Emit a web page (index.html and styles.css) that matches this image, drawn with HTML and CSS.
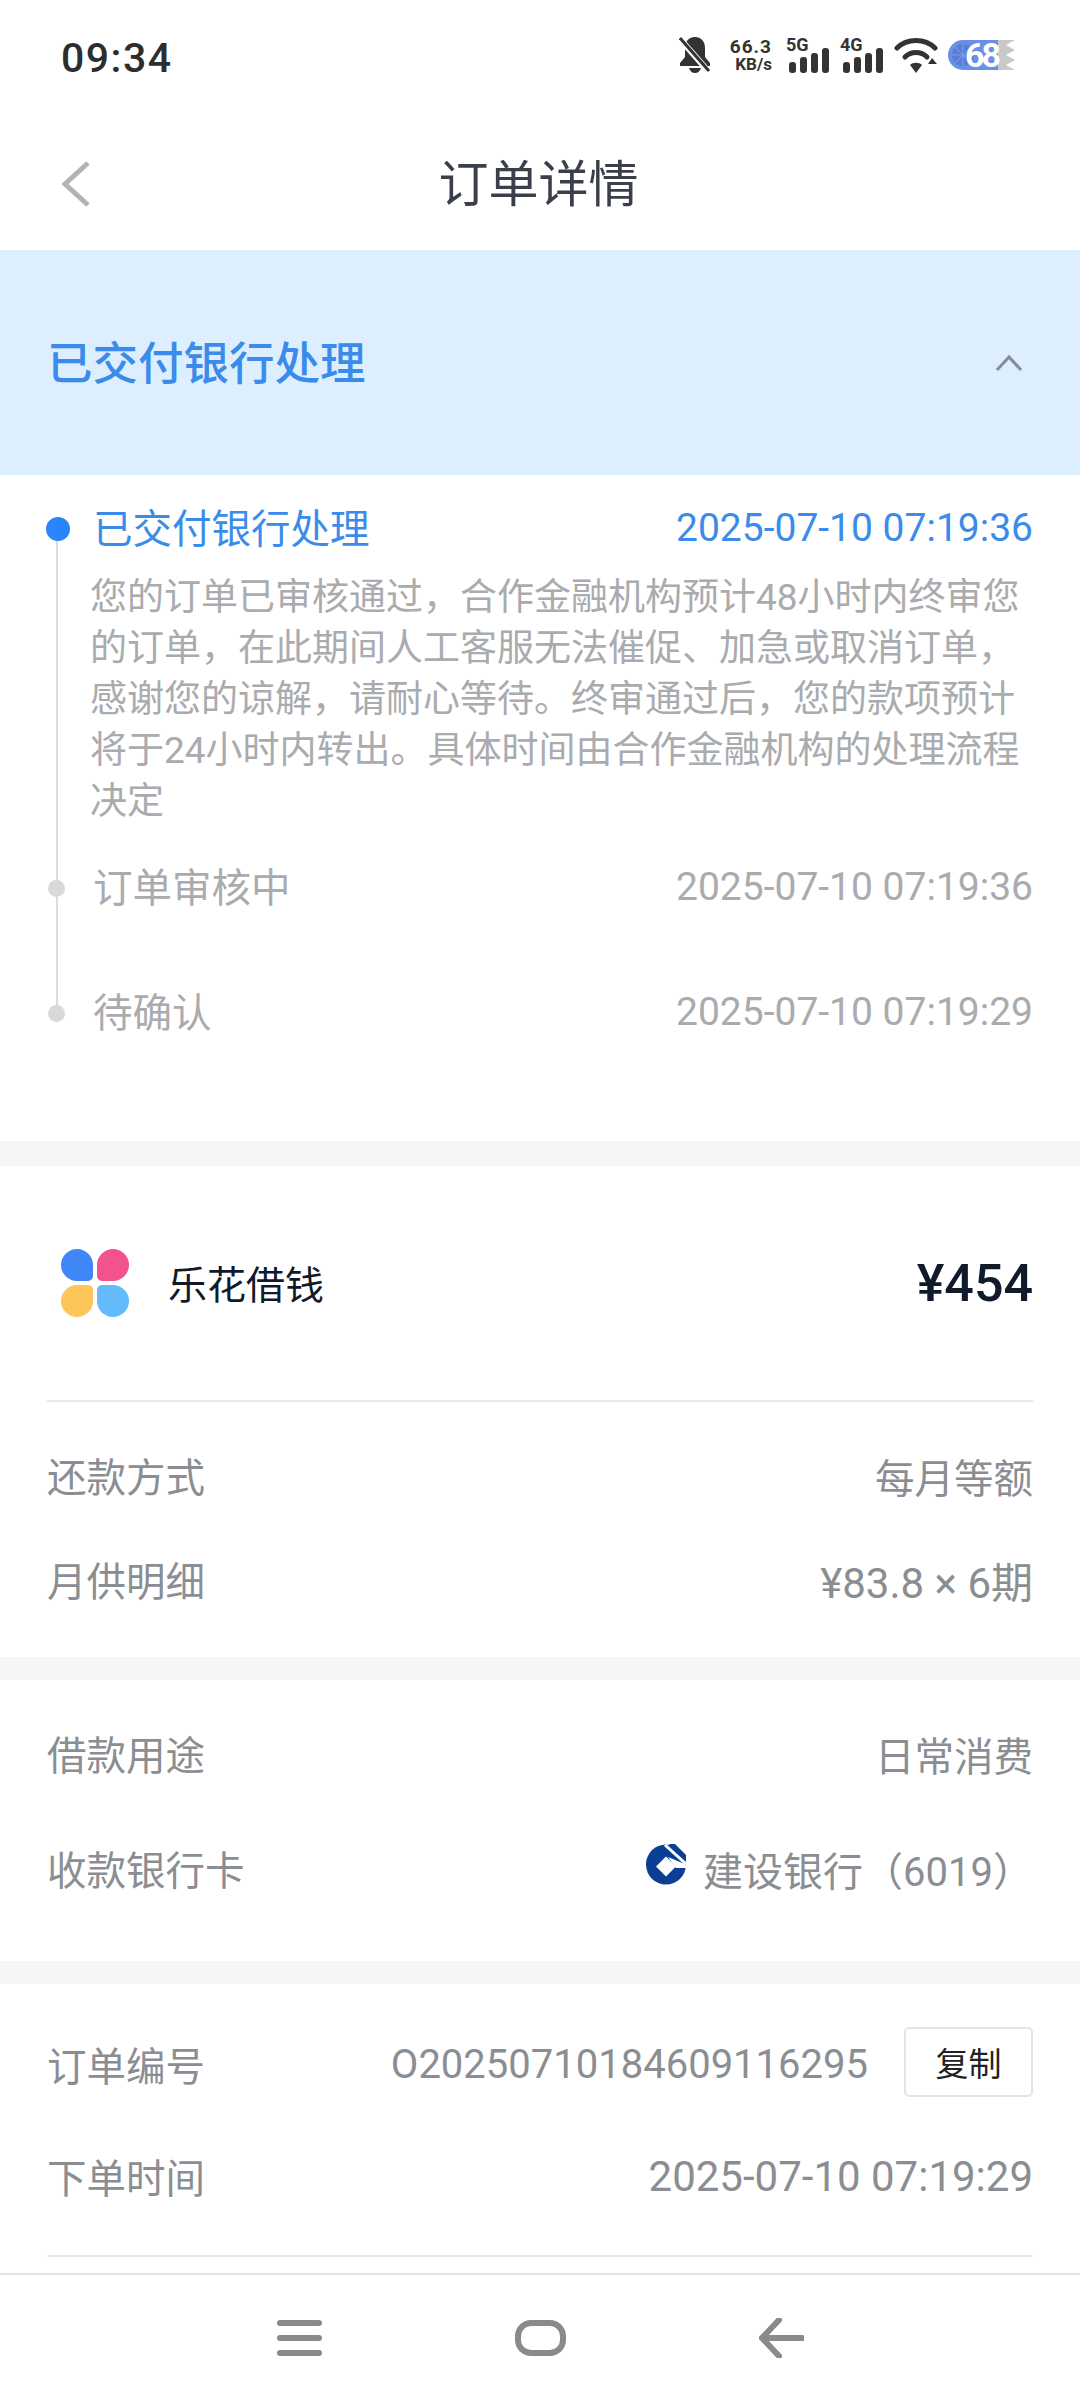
FILE: index.html
```html
<!DOCTYPE html>
<html lang="zh-CN">

<head>
    <meta charset="UTF-8" />
    <meta name="viewport" content="width=device-width, initial-scale=1" />
    <title>订单详情</title>
    <link rel="stylesheet" href="styles.css">
</head>

<body>
    <!-- Status bar -->
    <div class="status-bar">
        <span class="clock">09:34</span>
        <div class="status-icons">
            <svg class="bell" width="32" height="36" viewBox="0 0 32 36">
                <path d="M16 0c6 0 10 4 10 11v9l5 6v3H1v-3l5-6V11C6 4 10 0 16 0z" fill="#333" />
                <path d="M10 31h12c-1 3-3 5-6 5s-5-2-6-5z" fill="#333" />
                <path d="M1 2l29 33" stroke="#fff" stroke-width="6" />
                <path d="M1 1l29 33" stroke="#333" stroke-width="3" />
            </svg>
            <div class="speed"><span>66.3</span><span>KB/s</span></div>
            <div class="signal">
                <span>5G</span>
                <svg width="41" height="25" viewBox="0 0 41 25" fill="#333">
                    <rect x="0" y="14" width="7" height="11" rx="3" />
                    <rect x="11" y="9" width="7" height="16" rx="3" />
                    <rect x="22" y="5" width="7" height="20" rx="3" />
                    <rect x="33" y="0" width="7" height="25" rx="3" />
                </svg>
            </div>
            <div class="signal">
                <span>4G</span>
                <svg width="41" height="25" viewBox="0 0 41 25" fill="#333">
                    <rect x="0" y="14" width="7" height="11" rx="3" />
                    <rect x="11" y="9" width="7" height="16" rx="3" />
                    <rect x="22" y="5" width="7" height="20" rx="3" />
                    <rect x="33" y="0" width="7" height="25" rx="3" />
                </svg>
            </div>
            <svg class="wifi" width="44" height="36" viewBox="0 0 44 36">
                <g fill="none" stroke="#333" stroke-width="5" stroke-linecap="round">
                    <path d="M3 11C13 1 31 1 41 11" />
                    <path d="M11 20c6-6 16-6 22 0" />
                </g>
                <path d="M16 28c3-3 9-3 12 0l-6 8z" fill="#333" />
                <path d="M34 27l4-6 5 6z" fill="#333" />
            </svg>
            <div class="battery">
                <svg width="67" height="30" viewBox="0 0 67 30">
                    <path d="M50 0h17l-9 5 9 5-9 5 9 5-9 5 9 5H50z" fill="#c9c9c9" />
                    <path d="M15 0h35v30H15a15 15 0 0 1 0-30z" fill="#6b8fe3" />
                    <circle cx="15" cy="15" r="11" fill="#5a7ed6" />
                    <path d="M15 4v22M4 15h22M7 7l16 16M23 7L7 23" stroke="#7d9eea" stroke-width="1" />
                </svg>
                <span>68</span>
            </div>
        </div>
    </div>

    <!-- Title bar -->
    <div class="title-bar">
        <svg class="back" width="32" height="48" viewBox="0 0 32 48">
            <path d="M28 3L5 24l23 21" fill="none" stroke="#b3b3b3" stroke-width="5" />
        </svg>
        <h1>订单详情</h1>
    </div>

    <div class="page">
        <div class="banner">
            <span>已交付银行处理</span>
            <svg width="28" height="18" viewBox="0 0 28 18">
                <path d="M2 16L14 3l12 13" fill="none" stroke="#858c94" stroke-width="3" />
            </svg>
        </div>

        <!-- Timeline -->
        <div class="timeline">
            <div class="tl-line"></div>
            <div class="tl-item active">
                <i class="tl-dot"></i>
                <span class="tl-name">已交付银行处理</span>
                <span class="tl-time">2025-07-10 07:19:36</span>
            </div>
            <p class="tl-desc">您的订单已审核通过，合作金融机构预计48小时内终审您的订单，在此期间人工客服无法催促、加急或取消订单，感谢您的谅解，请耐心等待。终审通过后，您的款项预计将于24小时内转出。具体时间由合作金融机构的处理流程决定</p>
            <div class="tl-item second">
                <i class="tl-dot"></i>
                <span class="tl-name">订单审核中</span>
                <span class="tl-time">2025-07-10 07:19:36</span>
            </div>
            <div class="tl-item third">
                <i class="tl-dot"></i>
                <span class="tl-name">待确认</span>
                <span class="tl-time">2025-07-10 07:19:29</span>
            </div>
        </div>

        <!-- Product -->
        <div class="section">
            <div class="product">
                <div class="logo"><i class="blue"></i><i class="pink"></i><i class="yellow"></i><i class="sky"></i></div>
                <span class="product-name">乐花借钱</span>
                <span class="price">¥454</span>
            </div>
            <div class="rows rows-pay">
                <div class="row"><span>还款方式</span><span>每月等额</span></div>
                <div class="row"><span>月供明细</span><span class="wide-num">¥83.8 × 6期</span></div>
            </div>
        </div>

        <div class="section">
            <div class="rows rows-use">
                <div class="row"><span>借款用途</span><span>日常消费</span></div>
                <div class="row">
                    <span>收款银行卡</span>
                    <span class="bank">
                        <svg width="40" height="41" viewBox="0 0 40 41">
                            <circle cx="20" cy="20.5" r="20" fill="#0b3f96" />
                            <path d="M23 0h6l11 11v7z" fill="#0b3f96" />
                            <path d="M19 1l21 19" stroke="#fff" stroke-width="3" fill="none" />
                            <path d="M22 13l19 8v3H30z" fill="#fff" />
                            <path d="M20 12.500l10 10-10 10-10-10z" fill="#fff" />
                        </svg>
                        <span>建设银行（6019）</span>
                    </span>
                </div>
            </div>
        </div>

        <div class="section last">
            <div class="rows rows-order">
                <div class="row">
                    <span>订单编号</span>
                    <span class="order-no">O20250710184609116295<button class="copy">复制</button></span>
                </div>
                <div class="row"><span>下单时间</span><span class="wide-num">2025-07-10 07:19:29</span></div>
            </div>
            <div class="end-rule"></div>
        </div>
    </div>

    <!-- System nav -->
    <div class="nav-bar">
        <svg width="45" height="36" viewBox="0 0 45 36" fill="#8a8a8a">
            <rect y="0" width="45" height="6" rx="3" />
            <rect y="15" width="45" height="6" rx="3" />
            <rect y="30" width="45" height="6" rx="3" />
        </svg>
        <svg width="51" height="36" viewBox="0 0 51 36">
            <rect x="3" y="3" width="45" height="30" rx="13" fill="none" stroke="#8a8a8a" stroke-width="6" />
        </svg>
        <svg width="45" height="40" viewBox="0 0 45 40">
            <path d="M43 20H3M20 2L3 20l17 18" fill="none" stroke="#8a8a8a" stroke-width="6" stroke-linecap="round" stroke-linejoin="round" />
        </svg>
    </div>
</body>

</html>
```

FILE: styles.css
```css
* {
    box-sizing: border-box;
}

body {
    margin: 0;
    height: 2400px;
    display: flex;
    flex-direction: column;
    overflow: hidden;
    font-family: Roboto, "Noto Sans CJK SC", sans-serif;
    background-color: #fff;
    color: #8a8e92;
}

/* status bar */
.status-bar {
    height: 110px;
    padding: 5px 65px 0 61px;
    display: flex;
    justify-content: space-between;
    align-items: center;
    flex-shrink: 0;
}

.clock {
    font-size: 41px;
    font-weight: 500;
    letter-spacing: 1.5px;
    color: #2d2d2d;
}

.status-icons {
    display: flex;
    align-items: center;
    height: 36px;
    margin-top: -5px;
    color: #333;
}

.bell {
    margin-right: 12px;
}

.speed {
    display: flex;
    flex-direction: column;
    align-items: flex-end;
    width: 49px;
    margin-right: 14px;
    font-size: 19px;
    font-weight: 700;
    line-height: 19px;
    letter-spacing: 1px;
}

.speed span:last-child {
    font-size: 17px;
    line-height: 17px;
    letter-spacing: 0;
}

.signal {
    position: relative;
    width: 43px;
    height: 36px;
    margin-right: 11px;
    padding: 11px 0 0 3px;
}

.signal span {
    position: absolute;
    left: 0;
    top: -1px;
    font-size: 18px;
    font-weight: 700;
    line-height: 17px;
}

.signal svg {
    display: block;
}

.wifi {
    margin-right: 10px;
}

.battery {
    position: relative;
    width: 67px;
    height: 30px;
}

.battery svg {
    display: block;
}

.battery span {
    position: absolute;
    left: 17px;
    top: 0;
    font-size: 34px;
    line-height: 30px;
    letter-spacing: -3px;
    font-weight: 700;
    color: #fff;
}

/* title bar */
.title-bar {
    position: relative;
    height: 140px;
    display: flex;
    justify-content: center;
    align-items: center;
    flex-shrink: 0;
}

.title-bar h1 {
    margin: 0 3px 0 0;
    font-size: 50px;
    font-weight: 400;
    color: #3a3f4b;
}

.back {
    position: absolute;
    left: 60px;
    top: 50px;
}

.page {
    flex: 1;
    overflow: hidden;
}

.banner {
    height: 225px;
    padding: 0 57px 0 47px;
    display: flex;
    justify-content: space-between;
    align-items: center;
    background-color: #ddeeff;
    color: #3a8bea;
    font-size: 45.5px;
    font-weight: 500;
}

.banner span {
    margin-top: -5px;
}

/* timeline */
.timeline {
    position: relative;
    height: 691px;
    padding: 26px 47px 0 0;
    border-bottom: 25px solid #f5f6f6;
}

.tl-line {
    position: absolute;
    left: 56px;
    top: 60px;
    width: 2px;
    height: 480px;
    background-color: #dcdcdc;
}

.tl-item {
    position: relative;
    height: 56px;
    padding-left: 93px;
    display: flex;
    justify-content: space-between;
    align-items: center;
    font-size: 39px;
    color: #a9abae;
}

.tl-name {
    margin-top: -7px;
    font-size: 39.5px;
}

.tl-time {
    margin-top: -2px;
}

.tl-dot {
    position: absolute;
    left: 48px;
    top: 20px;
    width: 17px;
    height: 17px;
    border-radius: 50%;
    background-color: #d8d9db;
}

.tl-item.active {
    color: #3a8bea;
}

.tl-item.active .tl-dot {
    left: 46px;
    top: 16px;
    width: 24px;
    height: 24px;
    background-color: #2a84fb;
}

.tl-item.second {
    margin-top: 33px;
}

.tl-item.third {
    margin-top: 69px;
}

.tl-desc {
    margin: 15px 0 0 90px;
    font-size: 37px;
    line-height: 51px;
    color: #a9abae;
}

/* sections */
.section {
    padding: 0 47px;
    border-bottom: 23px solid #f5f6f6;
}

.section.last {
    border-bottom: 0;
}

.product {
    height: 236px;
    padding-left: 14px;
    display: flex;
    align-items: center;
    border-bottom: 2px solid #e8e8e8;
}

.logo {
    display: grid;
    grid-template-columns: 32px 32px;
    grid-template-rows: 32px 32px;
    gap: 4px;
    margin-right: 39px;
}

.logo i {
    display: block;
}

.logo .blue {
    background-color: #3f86f8;
    border-radius: 50% 50% 5px 50%;
}

.logo .pink {
    background-color: #f3528f;
    border-radius: 50% 50% 50% 5px;
}

.logo .yellow {
    background-color: #fec558;
    border-radius: 50% 5px 50% 50%;
}

.logo .sky {
    background-color: #64bbfb;
    border-radius: 5px 50% 50% 50%;
}

.product-name {
    flex: 1;
    margin-top: -3px;
    font-size: 39px;
    color: #111a2a;
}

.price {
    font-size: 52px;
    font-weight: 500;
    color: #111a2a;
}

.rows {
    display: flex;
    flex-direction: column;
    font-size: 39.5px;
}

.row {
    height: 104px;
    display: flex;
    justify-content: space-between;
    align-items: center;
}

.row > span:first-child {
    margin-top: -6px;
}

.row > span:last-child {
    margin-top: -3px;
}

.row > .wide-num {
    margin-top: -4px;
    font-size: 42px;
}

.rows-pay {
    padding: 23px 0 24px;
}

.rows-use {
    padding-top: 23px;
    padding-bottom: 39px;
    gap: 11px;
}

.rows-order {
    padding-top: 30px;
    gap: 8px;
}

.bank {
    display: flex;
    align-items: center;
    font-size: 40px;
}

.bank svg {
    margin: -8px 17px 0 0;
}

.row > .order-no {
    display: flex;
    align-items: center;
    margin-top: 0;
    font-size: 40px;
}

.copy {
    width: 129px;
    height: 70px;
    margin: -5px 0 0 36px;
    padding: 0;
    font-family: inherit;
    font-size: 33px;
    color: #222;
    background-color: #fff;
    border: 2px solid #e4e4e4;
    border-radius: 5px;
}

.end-rule {
    height: 2px;
    margin-top: 25px;
    background-color: #e8e8e8;
}

/* system nav */
.nav-bar {
    height: 127px;
    flex-shrink: 0;
    display: flex;
    justify-content: center;
    align-items: center;
    gap: 193px;
    border-top: 2px solid #e2e2e2;
}
```
